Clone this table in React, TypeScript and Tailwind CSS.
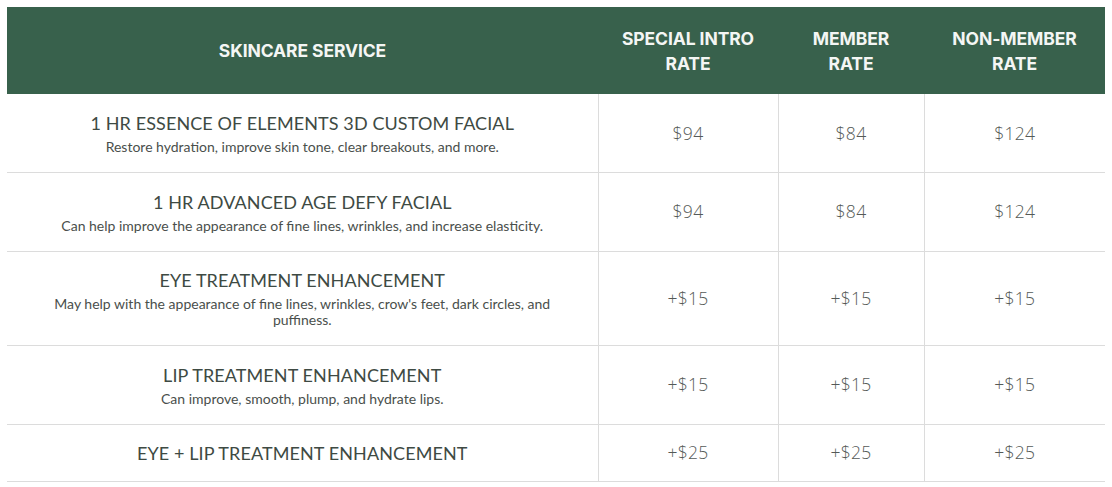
const services = [
  {
    name: "1 HR ESSENCE OF ELEMENTS 3D CUSTOM FACIAL",
    desc: "Restore hydration, improve skin tone, clear breakouts, and more.",
    rates: ["$94", "$84", "$124"],
    h: "h-[78px]",
  },
  {
    name: "1 HR ADVANCED AGE DEFY FACIAL",
    desc: "Can help improve the appearance of fine lines, wrinkles, and increase elasticity.",
    rates: ["$94", "$84", "$124"],
    h: "h-[79px]",
  },
  {
    name: "EYE TREATMENT ENHANCEMENT",
    desc: "May help with the appearance of fine lines, wrinkles, crow's feet, dark circles, and puffiness.",
    rates: ["+$15", "+$15", "+$15"],
    h: "h-[94px]",
  },
  {
    name: "LIP TREATMENT ENHANCEMENT",
    desc: "Can improve, smooth, plump, and hydrate lips.",
    rates: ["+$15", "+$15", "+$15"],
    h: "h-[79px]",
  },
  {
    name: "EYE + LIP TREATMENT ENHANCEMENT",
    desc: "",
    rates: ["+$25", "+$25", "+$25"],
    h: "h-[57px]",
  },
];

export default function App() {
  return (
    <div className="min-h-screen bg-white pt-[7px] pl-[7px]">
      <table className="w-[1098px] table-fixed border-collapse">
        <colgroup>
          <col className="w-[591px]" />
          <col className="w-[180px]" />
          <col className="w-[146px]" />
          <col className="w-[181px]" />
        </colgroup>
        <thead>
          <tr className="h-[87px] bg-[#38614c] text-[#f4f6f4] font-['Inter',sans-serif] text-[17.5px] font-semibold leading-[25px] tracking-[-0.1px]">
            <th className="text-center align-middle">SKINCARE SERVICE</th>
            <th className="text-center align-middle">SPECIAL INTRO<br />RATE</th>
            <th className="text-center align-middle">MEMBER<br />RATE</th>
            <th className="text-center align-middle">NON-MEMBER<br />RATE</th>
          </tr>
        </thead>
        <tbody>
          {services.map((s) => (
            <tr key={s.name} className={`${s.h} border-b border-[#dcdcdc]`}>
              <td className="border-r border-[#dcdcdc] px-10 text-center align-middle">
                <div className="font-['Lato',sans-serif] text-[18px] leading-[24px] text-[#3e4a43] tracking-[0.1px]">
                  {s.name}
                </div>
                {s.desc && (
                  <div className="mt-[4px] font-['Lato',sans-serif] text-[14px] leading-[16px] text-[#4a4f4c]">
                    {s.desc}
                  </div>
                )}
              </td>
              {s.rates.map((r, i) => (
                <td
                  key={i}
                  className={`text-center align-middle font-['Open_Sans',sans-serif] text-[17.5px] font-light tracking-[0.3px] text-[#555a57] ${i < 2 ? "border-r border-[#dcdcdc]" : ""}`}
                >
                  {r}
                </td>
              ))}
            </tr>
          ))}
        </tbody>
      </table>
    </div>
  );
}
